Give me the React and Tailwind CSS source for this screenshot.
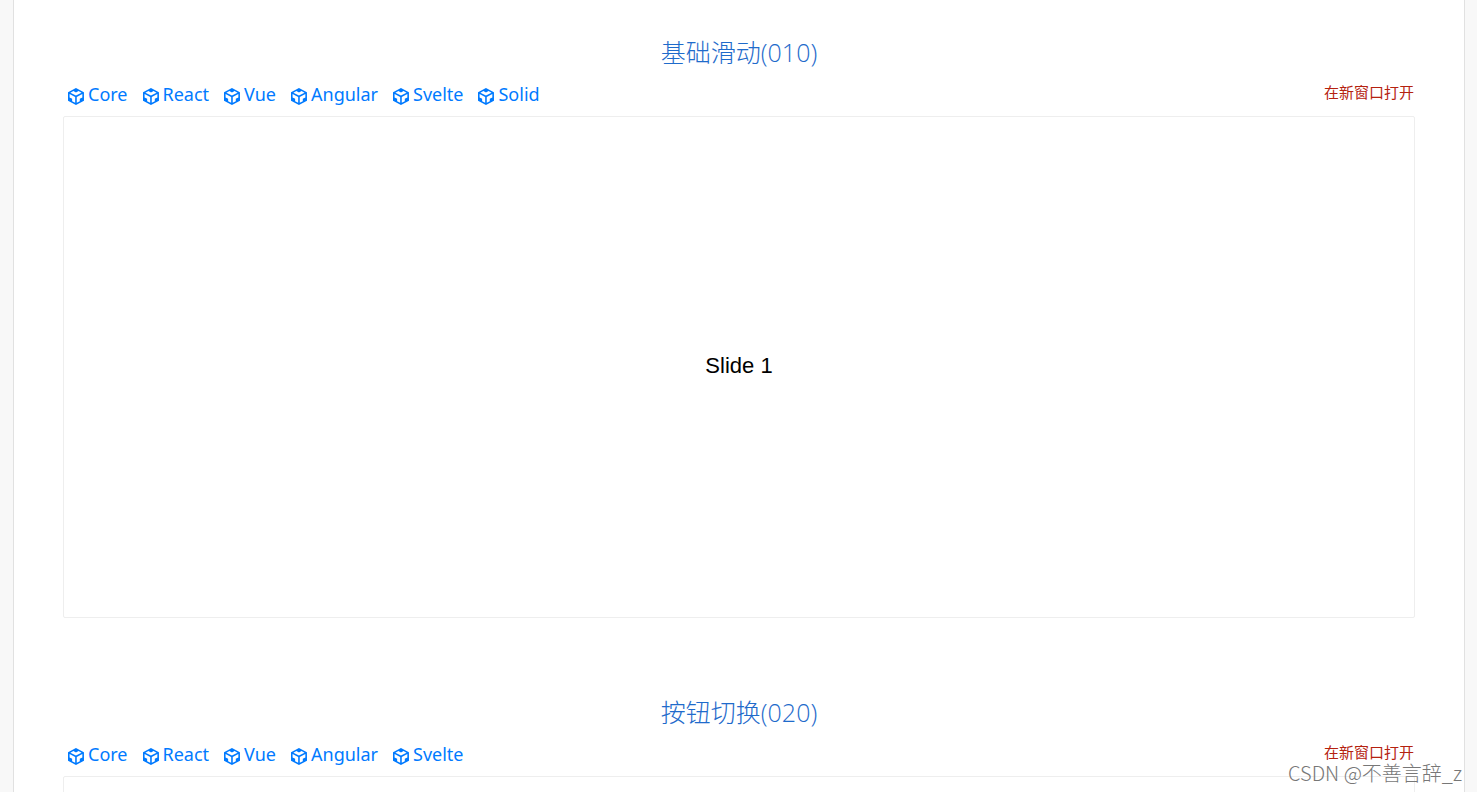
const demos = [
  {
    id: '010',
    title: '基础滑动',
    frameworks: ['Core', 'React', 'Vue', 'Angular', 'Svelte', 'Solid'],
    slide: 'Slide 1',
  },
  {
    id: '020',
    title: '按钮切换',
    frameworks: ['Core', 'React', 'Vue', 'Angular', 'Svelte'],
    slide: null,
  },
];

function SandboxIcon() {
  return (
    <svg viewBox="2 0 21 24" className="mt-1 h-[17px] w-4 shrink-0" fill="currentColor" preserveAspectRatio="none" aria-hidden="true">
      <path d="M2 6l10.455-6L22.91 6 23 17.95 12.455 24 2 18V6zm2.088 2.481v4.757l3.345 1.86v3.516l3.972 2.296v-8.272L4.088 8.481zm16.739 0l-7.317 4.157v8.272l3.972-2.296V15.1l3.345-1.861V8.48zM5.134 6.601l7.303 4.144 7.32-4.18-3.871-2.197-3.41 1.945-3.43-1.968L5.133 6.6z" />
    </svg>
  );
}

function Demo({ demo }) {
  return (
    <section className="mb-[76px]">
      <h2 className="text-center font-['Open_Sans','Noto_Sans_CJK_SC',sans-serif] text-[25px] leading-9 font-light text-[#1f6bcb]">
        {demo.title}({demo.id})
      </h2>
      <div className="mt-[10px] flex h-9 items-start justify-between pr-px pl-[5px]">
        <div className="flex gap-[15px]">
          {demo.frameworks.map((name) => (
            <a key={name} href={`#${demo.id}-${name.toLowerCase()}`} className="flex items-center gap-1 text-[18px] leading-7 text-[#007aff]">
              <SandboxIcon />
              {name}
            </a>
          ))}
        </div>
        <a href={`#${demo.id}`} className="text-[15px] leading-6 text-[#b5220f]">在新窗口打开</a>
      </div>
      <div className="flex h-[502px] items-center justify-center rounded-xs border border-[#eee] bg-white pb-1 font-['Liberation_Sans',sans-serif] text-[22px] text-black">
        {demo.slide}
      </div>
    </section>
  );
}

export default function App() {
  return (
    <div className="relative h-screen overflow-hidden bg-[#f8f8f8] font-['Noto_Sans','Noto_Sans_CJK_SC',sans-serif]">
      <main className="mr-3 ml-[13px] border-x border-[#e1e1e1] bg-white px-[49px] pt-[34px]">
        {demos.map((demo) => (
          <Demo key={demo.id} demo={demo} />
        ))}
      </main>
      <p className="absolute right-[15px] bottom-[5px] font-['Noto_Sans_CJK_SC',sans-serif] text-[20px] leading-7 font-light text-[#777]">
        CSDN @不善言辞_z
      </p>
    </div>
  );
}
